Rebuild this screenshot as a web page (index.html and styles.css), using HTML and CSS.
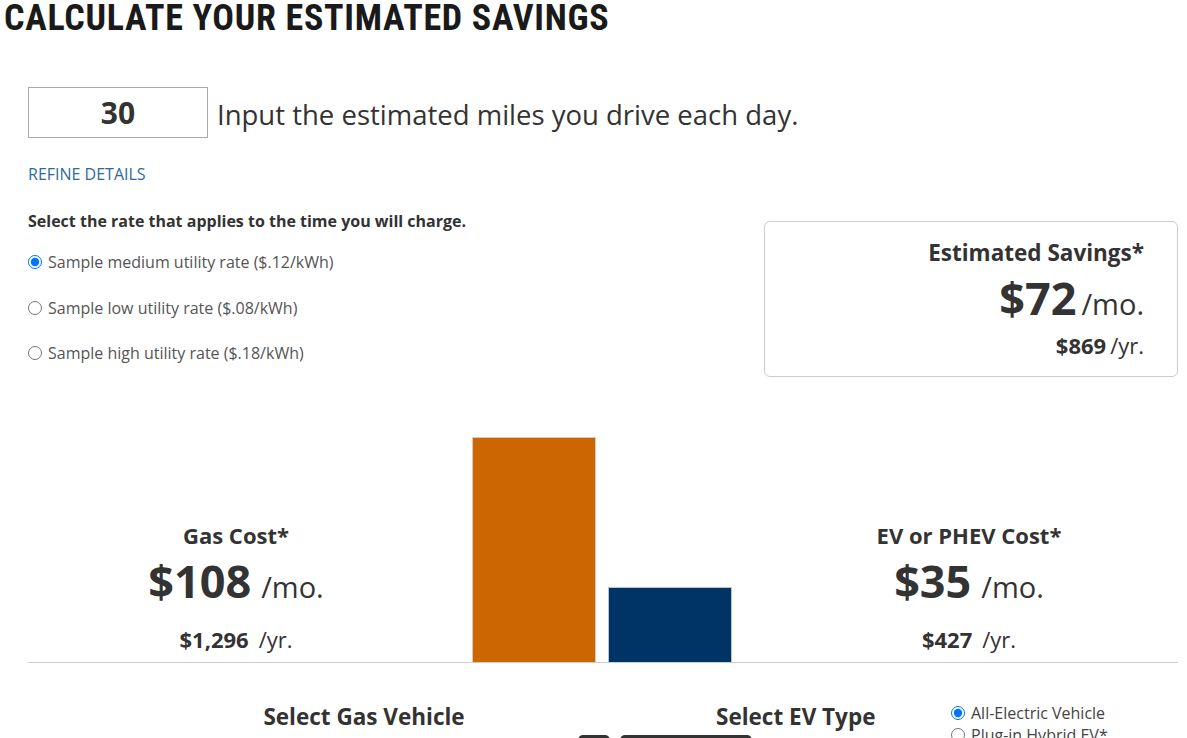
FILE: index.html
```html
<!DOCTYPE html>
<html>
<head>
<meta charset="utf-8">
<link rel="stylesheet" href="styles.css">
</head>
<body>
<h1 class="title">CALCULATE YOUR ESTIMATED SAVINGS</h1>
<main class="calc">
  <div class="miles-row">
    <div class="miles-box">30</div>
    <span class="miles-label">Input the estimated miles you drive each day.</span>
  </div>
  <a class="refine">REFINE DETAILS</a>
  <div class="rates-row">
    <div class="rates">
      <div class="rates-head">Select the rate that applies to the time you will charge.</div>
      <label class="rate"><input type="radio" name="rate" checked> Sample medium utility rate ($.12/kWh)</label>
      <label class="rate"><input type="radio" name="rate"> Sample low utility rate ($.08/kWh)</label>
      <label class="rate"><input type="radio" name="rate"> Sample high utility rate ($.18/kWh)</label>
    </div>
    <div class="savings">
      <div class="savings-title">Estimated Savings*</div>
      <div class="savings-mo"><span class="big">$72</span><span class="unit">/mo.</span></div>
      <div class="savings-yr"><span class="yr-num">$869</span><span class="yr-unit">/yr.</span></div>
    </div>
  </div>
  <div class="cost-row">
    <div class="cost">
      <div class="cost-title">Gas Cost*</div>
      <div class="cost-mo"><span class="big">$108</span><span class="unit">/mo.</span></div>
      <div class="cost-yr"><span class="yr-num">$1,296</span><span class="yr-unit">/yr.</span></div>
    </div>
    <div class="chart">
      <div class="bar bar-gas" style="height:225px"></div>
      <div class="bar bar-ev" style="height:75px"></div>
    </div>
    <div class="cost">
      <div class="cost-title">EV or PHEV Cost*</div>
      <div class="cost-mo"><span class="big">$35</span><span class="unit">/mo.</span></div>
      <div class="cost-yr"><span class="yr-num">$427</span><span class="yr-unit">/yr.</span></div>
    </div>
  </div>
  <div class="vehicle-row">
    <div class="vehicle-main">
      <div class="vehicle-heads">
        <h3 class="vh vh-gas">Select Gas Vehicle</h3>
        <h3 class="vh vh-ev">Select EV Type</h3>
      </div>
      <div class="vehicle-controls">
        <span class="ctrl ctrl-small"></span>
        <span class="ctrl ctrl-wide"></span>
      </div>
    </div>
    <div class="ev-types">
      <label class="ev-type"><input type="radio" name="ev" checked> All-Electric Vehicle</label>
      <label class="ev-type"><input type="radio" name="ev"> Plug-in Hybrid EV*</label>
    </div>
  </div>
</main>
</body>
</html>
```
FILE: styles.css
```css
* { box-sizing: border-box; }
html, body { margin: 0; padding: 0; background: #fff; }
body {
  font-family: "Open Sans", "Liberation Sans", sans-serif;
  color: #333;
  width: 1187px;
  height: 738px;
  overflow: hidden;
}
.title {
  margin: 0;
  padding-left: 4px;
  font-family: Roboto, "Liberation Sans", sans-serif;
  font-weight: 700;
  font-size: 36px;
  line-height: 36px;
  font-stretch: 75%;
  letter-spacing: 0.7px;
  color: #1a1a1a;
  white-space: nowrap;
}
.calc {
  width: 1150px;
  margin-left: 28px;
}
.miles-row {
  display: flex;
  align-items: center;
  margin-top: 51px;
}
.miles-box {
  width: 180px;
  height: 51px;
  border: 1px solid #aaa;
  display: flex;
  align-items: center;
  justify-content: center;
  font-weight: 700;
  font-size: 30px;
  color: #333;
}
.miles-label {
  margin-left: 9px;
  font-size: 27.5px;
  color: #333;
  padding-top: 4px;
}
.refine {
  display: block;
  margin-top: 26px;
  font-size: 16px;
  line-height: 20px;
  color: #2d6a9f;
}
.rates-row {
  display: flex;
  justify-content: space-between;
  align-items: flex-start;
  margin-top: 27px;
}
.rates {
  display: flex;
  flex-direction: column;
}
.rates-head {
  font-weight: 700;
  font-size: 16px;
  line-height: 20px;
  color: #333;
}
.rate {
  display: flex;
  align-items: center;
  font-size: 16px;
  line-height: 20px;
  color: #555;
  margin-top: 25.5px;
}
.rate:first-of-type { margin-top: 21px; }
.rate input, .ev-type input {
  margin: 0 6px 0 0;
  width: 14px;
  height: 14px;
}
.savings {
  width: 414px;
  margin-top: 10px;
  border: 1px solid #ccc;
  border-radius: 6px;
  padding: 16px 33px 17px 0;
  text-align: right;
}
.savings-title {
  font-weight: 700;
  font-size: 22.5px;
  line-height: 30px;
}
.savings-mo, .cost-mo {
  font-size: 45px;
  line-height: 50px;
}
.savings-mo { margin-top: 5px; }
.big {
  font-weight: 700;
  font-size: 45px;
}
.unit {
  font-size: 29px;
  line-height: 1;
}
.savings-mo .unit { margin-left: 5px; }
.savings-yr, .cost-yr {
  font-size: 22px;
  line-height: 28px;
}
.savings-yr { margin-top: 8px; }
.yr-num {
  font-weight: 700;
}
.savings-yr .yr-unit { margin-left: 4px; }
.cost-row {
  display: grid;
  grid-template-columns: 416px 316px 418px;
  height: 263px;
  margin-top: 23px;
  border-bottom: 1px solid #ccc;
}
.cost {
  align-self: end;
  text-align: center;
  padding-bottom: 9px;
}
.cost-title {
  font-weight: 700;
  font-size: 22px;
  line-height: 30px;
}
.cost-mo { margin-top: 6px; }
.cost-mo .unit { margin-left: 10px; }
.cost-yr { margin-top: 19px; }
.cost-yr .yr-unit { margin-left: 10px; }
.chart {
  display: flex;
  justify-content: center;
  align-items: flex-end;
  gap: 12px;
}
.bar {
  width: 124px;
  border: 1px solid #d9c9b8;
  border-bottom: none;
}
.bar-gas { background: #cc6600; }
.bar-ev { background: #003366; border-color: #b8c4d0; }
.vehicle-row {
  display: flex;
  align-items: flex-start;
}
.vehicle-main {
  width: 923px;
  padding-top: 38px;
}
.vehicle-heads {
  display: flex;
}
.vh {
  margin: 0;
  font-weight: 700;
  font-size: 22.5px;
  line-height: 31px;
  color: #333;
}
.vh-gas {
  width: 672px;
  text-align: center;
}
.vh-ev {
  margin-left: 16px;
}
.vehicle-controls {
  display: flex;
  gap: 10px;
  margin-left: 550px;
  margin-top: 3px;
}
.ctrl {
  display: block;
  height: 30px;
  background: #333;
  border-radius: 5px;
}
.ctrl-small { width: 32px; }
.ctrl-wide { width: 132px; }
.ev-types {
  display: flex;
  flex-direction: column;
  padding-top: 39px;
}
.ev-type {
  display: flex;
  align-items: center;
  font-size: 16px;
  font-stretch: 88%;
  line-height: 22px;
  color: #444;
}
```
